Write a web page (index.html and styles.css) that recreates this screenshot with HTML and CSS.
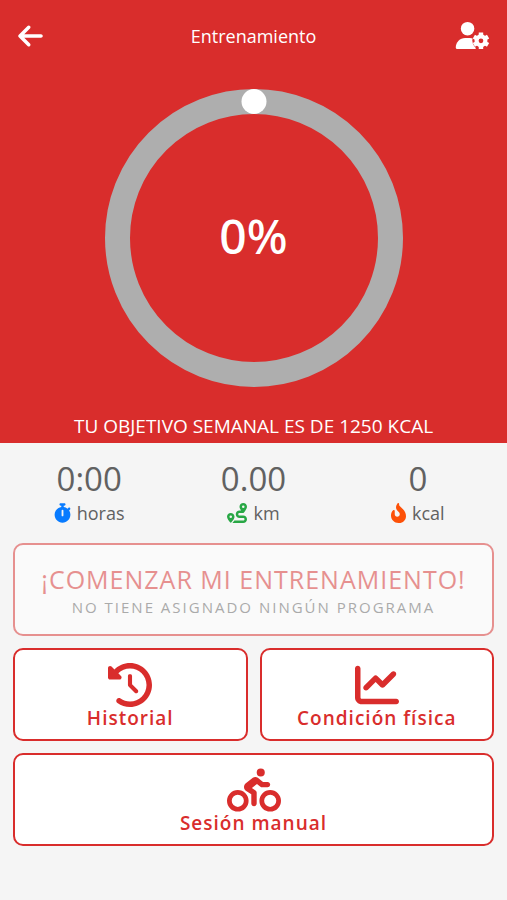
FILE: index.html
```html
<!DOCTYPE html>
<html lang="es">
<head>
<meta charset="utf-8">
<meta name="viewport" content="width=device-width, initial-scale=1">
<title>Entrenamiento</title>
<link rel="stylesheet" href="styles.css">
</head>
<body>
<header class="hero">
  <div class="topbar">
    <button class="icon-button" type="button" aria-label="Volver">
      <svg class="icon-back" viewBox="0 0 448 512"><path d="M9.4 233.4c-12.5 12.5-12.5 32.8 0 45.3l160 160c12.5 12.5 32.8 12.5 45.3 0s12.5-32.8 0-45.3L109.2 288H416c17.7 0 32-14.3 32-32s-14.3-32-32-32H109.2L214.6 118.6c12.5-12.5 12.5-32.8 0-45.3s-32.8-12.5-45.3 0l-160 160z"/></svg>
    </button>
    <h1 class="title">Entrenamiento</h1>
    <button class="icon-button" type="button" aria-label="Ajustes de usuario">
      <svg class="icon-user" viewBox="0 0 640 512">
        <circle cx="236" cy="126" r="128"/>
        <path d="M190 304h92c40 0 78 14 108 38v170H42C26 512 12 499 12 482C12 384 92 304 190 304z"/>
        <circle class="gear-gap" cx="490" cy="356" r="164"/>
        <circle class="gear-ring" cx="490" cy="356" r="84"/>
        <path class="gear-teeth" d="M490 200v60M490 452v60M355 278l52 30M573 404l52 30M355 434l52-30M573 308l52-30"/>
      </svg>
    </button>
  </div>
  <div class="progress">
    <svg class="ring" viewBox="0 0 298 298" role="img" aria-label="Progreso semanal">
      <circle class="ring-track" cx="149" cy="149" r="136.500"/>
      <circle class="ring-knob" cx="149" cy="12.500" r="12.500"/>
    </svg>
    <span class="percent">0%</span>
  </div>
  <p class="goal">TU OBJETIVO SEMANAL ES DE 1250 KCAL</p>
</header>
<main class="content">
  <section class="stats">
    <div class="stat">
      <span class="value">0:00</span>
      <span class="unit"><svg class="icon-time" viewBox="0 0 448 512"><path d="M176 0c-17.700 0-32 14.300-32 32s14.300 32 32 32h16V98.400C92.300 113.800 16 200 16 304c0 114.900 93.100 208 208 208s208-93.100 208-208c0-41.800-12.300-80.700-33.500-113.200l24.100-24.100c12.500-12.500 12.500-32.800 0-45.300s-32.800-12.500-45.300 0L355.700 143c-28.100-23-62.200-38.800-99.700-44.600V64h16c17.700 0 32-14.300 32-32s-14.300-32-32-32H176zm72 192V320c0 13.300-10.700 24-24 24s-24-10.700-24-24V192c0-13.300 10.700-24 24-24s24 10.700 24 24z"/></svg>horas</span>
    </div>
    <div class="stat">
      <span class="value">0.00</span>
      <span class="unit"><svg class="icon-route" viewBox="0 0 512 512"><path d="M512 96c0 50.200-59.100 125.100-84.600 155c-3.800 4.400-9.400 6.100-14.500 5H320c-17.700 0-32 14.300-32 32s14.300 32 32 32h96c53 0 96 43 96 96s-43 96-96 96H139.600c8.700-9.900 19.300-22.600 30-36.800c6.300-8.400 12.800-17.600 19-27.200H416c17.700 0 32-14.300 32-32s-14.300-32-32-32H320c-53 0-96-43-96-96s43-96 96-96h39.800c-21-31.500-39.800-67.700-39.800-96c0-53 43-96 96-96s96 43 96 96zM117.100 489.100c-3.800 4.300-7.200 8.100-10.100 11.300l-1.800 2-.2-.2c-6 4.600-14.600 4-20-1.800C59.800 473 0 402.500 0 352c0-53 43-96 96-96s96 43 96 96c0 30-21.100 67-43.500 97.900c-10.700 14.700-21.700 28-30.800 38.500l-.6 .7zM128 352a32 32 0 1 0-64 0 32 32 0 1 0 64 0zM416 128a32 32 0 1 0 0-64 32 32 0 1 0 0 64z"/></svg>km</span>
    </div>
    <div class="stat">
      <span class="value">0</span>
      <span class="unit"><svg class="icon-fire" viewBox="0 0 384 512"><path d="M153.600 29.900l16-21.300C173.600 3.200 180 0 186.700 0C198.400 0 208 9.600 208 21.300V43.500c0 13.100 5.400 25.700 14.900 34.700L307.600 159C356.400 205.600 384 270.200 384 337.700C384 434 306 512 209.700 512H192C86 512 0 426 0 320v-3.800c0-48.800 19.400-95.600 53.900-130.100l3.500-3.500c4.200-4.200 10-6.600 16-6.600C85.900 176 96 186.100 96 198.600V288c0 35.300 28.700 64 64 64s64-28.700 64-64v-3.900c0-18-7.200-35.300-19.900-48l-38.600-38.600c-24-24-37.500-56.700-37.500-90.700c0-27.700 9-54.800 25.600-76.900z"/></svg>kcal</span>
    </div>
  </section>
  <section class="actions">
    <button class="card wide" type="button" disabled>
      <span class="start">¡COMENZAR MI ENTRENAMIENTO!</span>
      <span class="note">NO TIENE ASIGNADO NINGÚN PROGRAMA</span>
    </button>
    <button class="card" type="button">
      <svg class="icon-card" viewBox="0 0 512 512"><path d="M75 75L41 41C25.900 25.900 0 36.600 0 57.900V168c0 13.300 10.700 24 24 24H134.100c21.400 0 32.100-25.900 17-41l-30.800-30.800C155 85.500 203 64 256 64c106 0 192 86 192 192s-86 192-192 192c-40.800 0-78.600-12.700-109.700-34.400c-14.500-10.100-34.400-6.600-44.600 7.900s-6.600 34.400 7.900 44.600C151.200 495 201.700 512 256 512c141.400 0 256-114.600 256-256S397.400 0 256 0C185.300 0 121.300 28.700 75 75zm181 53c-13.300 0-24 10.700-24 24V256c0 6.400 2.500 12.500 7 17l72 72c9.400 9.400 24.600 9.400 33.900 0s9.400-24.600 0-33.900l-65-65V152c0-13.300-10.700-24-24-24z"/></svg>
      <span class="label">Historial</span>
    </button>
    <button class="card" type="button">
      <svg class="icon-card" viewBox="0 0 512 512"><path d="M64 64c0-17.700-14.300-32-32-32S0 46.300 0 64V400c0 44.200 35.800 80 80 80H480c17.700 0 32-14.300 32-32s-14.300-32-32-32H80c-8.800 0-16-7.200-16-16V64zm406.600 86.600c12.500-12.500 12.500-32.800 0-45.300s-32.800-12.500-45.300 0L320 210.700l-57.400-57.400c-12.500-12.500-32.800-12.500-45.300 0l-112 112c-12.500 12.500-12.500 32.800 0 45.300s32.800 12.500 45.300 0L240 221.300l57.400 57.400c12.500 12.500 32.800 12.500 45.300 0l128-128z"/></svg>
      <span class="label">Condición física</span>
    </button>
    <button class="card wide" type="button">
      <svg class="icon-card icon-bike" viewBox="0 0 640 512"><path d="M400 96a48 48 0 1 0 0-96 48 48 0 1 0 0 96zm27.200 64l-61.800-48.800c-17.300-13.600-41.700-13.800-59.100-.3l-83.100 64.200c-30.700 23.800-28.500 70.800 4.300 91.600L288 305.100V416c0 17.700 14.300 32 32 32s32-14.300 32-32V288c0-10.700-5.300-20.700-14.200-26.600L295 232.900l60.300-48.500L396 217c5.700 4.500 12.700 7 20 7h64c17.700 0 32-14.300 32-32s-14.300-32-32-32H427.200zM56 384a72 72 0 1 1 144 0A72 72 0 1 1 56 384zm200 0A128 128 0 1 0 0 384a128 128 0 1 0 256 0zm184 0a72 72 0 1 1 144 0 72 72 0 1 1-144 0zm200 0a128 128 0 1 0-256 0 128 128 0 1 0 256 0z"/></svg>
      <span class="label">Sesión manual</span>
    </button>
  </section>
</main>
</body>
</html>
```
FILE: styles.css
```css
:root {
  --red: #d92d2c;
  --page: #f5f5f5;
  --gray: #616161;
}

* {
  box-sizing: border-box;
}

body {
  margin: 0;
  min-height: 100vh;
  background: var(--page);
  color: var(--gray);
  font-family: "Open Sans", "Noto Sans", sans-serif;
}

button {
  font: inherit;
}

svg {
  display: block;
  flex: none;
  fill: currentColor;
}

.hero {
  background: var(--red);
  color: #fff;
  padding: 16px 18px 4px;
}

.topbar {
  display: flex;
  align-items: center;
  justify-content: space-between;
  height: 39px;
}

.icon-button {
  display: flex;
  width: 34px;
  padding: 0;
  border: 0;
  background: none;
  color: inherit;
}

.icon-back {
  width: 25px;
  height: 28px;
}

.icon-user {
  width: 34px;
  height: 27px;
  overflow: visible;
}

.gear-gap {
  fill: var(--red);
}

.gear-ring {
  fill: none;
  stroke: #fff;
  stroke-width: 78;
}

.gear-teeth {
  fill: none;
  stroke: #fff;
  stroke-width: 84;
}

.title {
  margin: 0;
  font-size: 18px;
  font-weight: 400;
  line-height: 24px;
}

.progress {
  display: grid;
  place-items: center;
  margin-top: 34px;
}

.ring,
.percent {
  grid-area: 1 / 1;
}

.ring {
  width: 298px;
  max-width: 100%;
}

.ring-track {
  fill: none;
  stroke: #aeaeae;
  stroke-width: 25;
}

.percent {
  padding-bottom: 4px;
  font-family: "Noto Sans", "Open Sans", sans-serif;
  font-size: 48px;
  font-weight: 500;
  line-height: 56px;
}

.goal {
  margin: 26px 0 0;
  font-size: 19px;
  line-height: 26px;
  text-align: center;
}

.content {
  padding: 16px 13px;
}

.stats {
  display: grid;
  grid-template-columns: repeat(3, 1fr);
  margin: 0 -6px;
}

.stat {
  display: flex;
  flex-direction: column;
  align-items: center;
}

.value {
  font-size: 33px;
  line-height: 40px;
}

.unit {
  display: flex;
  align-items: center;
  gap: 6px;
  font-size: 18px;
  line-height: 28px;
}

.icon-time {
  width: 17px;
  height: 20px;
  color: #087bff;
}

.icon-route {
  width: 20px;
  height: 20px;
  color: #28a745;
}

.icon-fire {
  width: 15px;
  height: 20px;
  color: #fd5108;
}

.actions {
  display: grid;
  grid-template-columns: 1fr 1fr;
  gap: 12px;
  margin-top: 16px;
}

.card {
  display: flex;
  flex-direction: column;
  align-items: center;
  justify-content: center;
  min-height: 93px;
  padding: 2px 0 0;
  border: 2px solid var(--red);
  border-radius: 10px;
  background: #fff;
  color: var(--red);
  letter-spacing: 1px;
}

.card:disabled {
  opacity: 0.5;
}

.wide {
  grid-column: 1 / -1;
}

.start {
  font-size: 25px;
  line-height: 32px;
}

.note {
  color: var(--gray);
  font-size: 15px;
  letter-spacing: 2px;
  line-height: 24px;
}

.icon-card {
  width: 44px;
  height: 44px;
}

.icon-bike {
  width: 54px;
}

.label {
  font-size: 19px;
  font-weight: 600;
  line-height: 22px;
}
```
